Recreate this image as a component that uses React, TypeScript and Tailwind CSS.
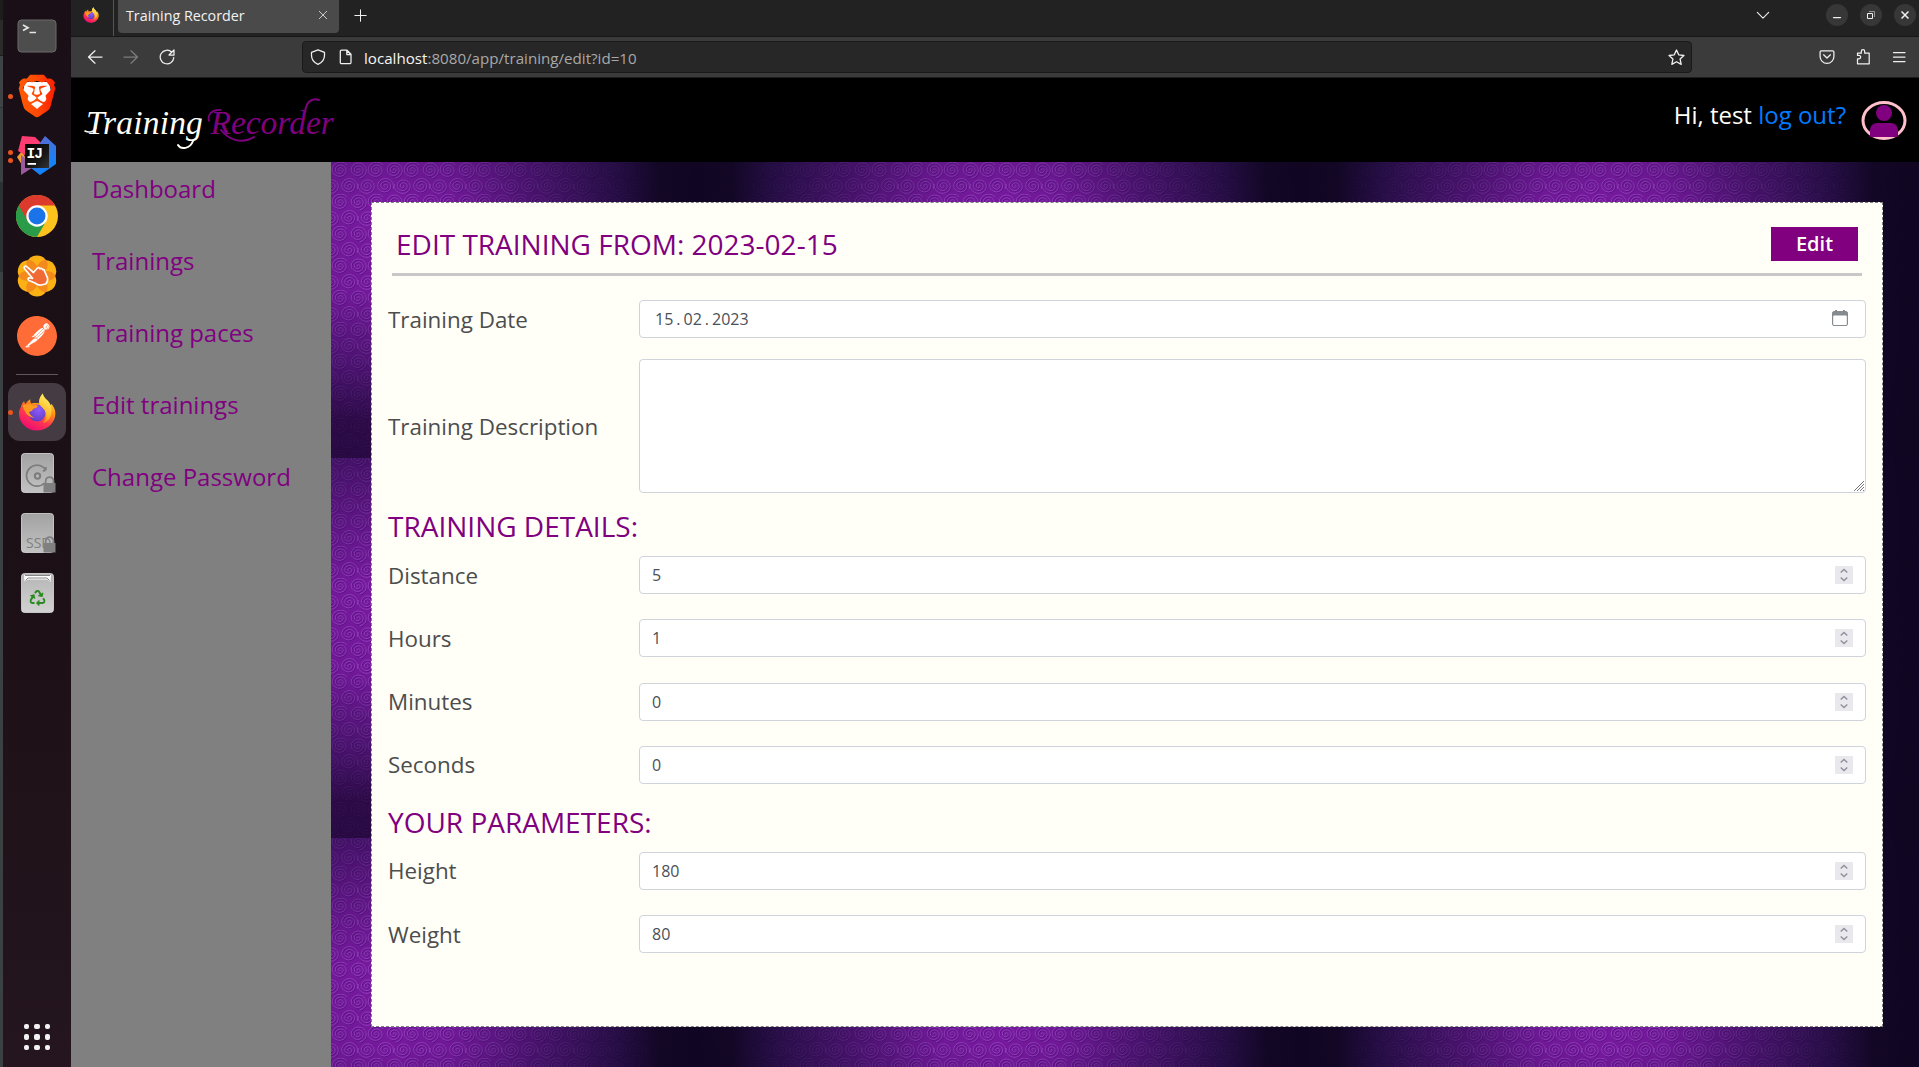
import React from "react";
import { SiBrave, SiPostman } from "react-icons/si";
import { FaRecycle } from "react-icons/fa";

const spiral = (cx: number, cy: number, r: number, start: number) => {
  const pts: string[] = [];
  const turns = 2.9;
  for (let i = 0; i <= 44; i++) {
    const t = i / 44;
    const a = start + t * turns * Math.PI * 2;
    pts.push(`${(cx + Math.cos(a) * r * t).toFixed(2)},${(cy + Math.sin(a) * r * t * 0.92).toFixed(2)}`);
  }
  return pts.join(" ");
};

const SWIRLS: [number, number, number][] = [
  [9, 8, 0],
  [27, 8, 2],
  [0, 24, 4],
  [18, 24, 1],
  [36, 24, 4],
];

function Wallpaper() {
  return (
    <svg className="absolute inset-0 h-full w-full" aria-hidden="true">
      <defs>
        <linearGradient id="sideShade">
          <stop offset="0" stopColor="#100622" />
          <stop offset=".06" stopColor="#100622" stopOpacity=".97" />
          <stop offset=".13" stopColor="#150a32" stopOpacity=".82" />
          <stop offset=".27" stopColor="#1b0b3c" stopOpacity=".48" />
          <stop offset=".4" stopColor="#1b0b3c" stopOpacity=".08" />
          <stop offset=".5" stopColor="#1b0b3c" stopOpacity="0" />
          <stop offset=".6" stopColor="#1b0b3c" stopOpacity=".08" />
          <stop offset=".73" stopColor="#1b0b3c" stopOpacity=".48" />
          <stop offset=".87" stopColor="#150a32" stopOpacity=".82" />
          <stop offset=".94" stopColor="#100622" stopOpacity=".97" />
          <stop offset="1" stopColor="#100622" />
        </linearGradient>
        <linearGradient id="downShade" x2="0" y2="1">
          <stop offset="0" stopColor="#1b0b3c" stopOpacity=".55" />
          <stop offset=".2" stopColor="#1b0b3c" stopOpacity=".2" />
          <stop offset=".34" stopColor="#1b0b3c" stopOpacity="0" />
          <stop offset=".56" stopColor="#1b0b3c" stopOpacity=".04" />
          <stop offset=".75" stopColor="#1b0b3c" stopOpacity=".45" />
          <stop offset=".9" stopColor="#1b0632" stopOpacity=".8" />
          <stop offset="1" stopColor="#1b0632" stopOpacity=".85" />
        </linearGradient>
        <pattern id="swirls" width="36" height="32" patternUnits="userSpaceOnUse">
          <rect width="36" height="32" fill="#7a1aa2" />
          {SWIRLS.map(([x, y, a], i) => (
            <g key={i} fill="none">
              <polyline points={spiral(x + 0.6, y + 0.8, 9, a)} stroke="#5f0f88" strokeWidth="1" />
              <polyline points={spiral(x, y, 9, a)} stroke="#a047c8" strokeWidth=".8" />
            </g>
          ))}
        </pattern>
        <pattern id="shade" x="-243" y="-84" width="607" height="380" patternUnits="userSpaceOnUse">
          <rect width="607" height="380" fill="url(#downShade)" />
          <rect width="607" height="380" fill="url(#sideShade)" />
        </pattern>
      </defs>
      <rect width="100%" height="100%" fill="url(#swirls)" />
      <rect width="100%" height="100%" fill="url(#shade)" />
    </svg>
  );
}

/* ---------- dock ---------- */

function Slot({ children, dots = 0, active = false }: { children: React.ReactNode; dots?: number; active?: boolean }) {
  return (
    <div className="relative flex h-[60px] w-[68px] shrink-0 items-center justify-center">
      <div className={active ? "flex h-[58px] w-[58px] items-center justify-center rounded-xl bg-[#453b42]" : "flex items-center justify-center"}>
        {children}
      </div>
      <div className="absolute left-[5px] top-0 flex h-full flex-col items-center justify-center gap-[3px]">
        {Array.from({ length: dots }, (_, i) => (
          <span key={i} className="h-[5px] w-[5px] rounded-full bg-[#e95420]" />
        ))}
      </div>
    </div>
  );
}

function FirefoxLogo({ size, id }: { size: number; id: string }) {
  return (
    <svg width={size} height={size} viewBox="0 0 40 40">
      <defs>
        <linearGradient id={`${id}a`} x1=".8" y1="0" x2=".25" y2="1">
          <stop offset="0" stopColor="#fff44f" />
          <stop offset=".35" stopColor="#ff980e" />
          <stop offset=".65" stopColor="#ff3750" />
          <stop offset="1" stopColor="#eb0878" />
        </linearGradient>
        <linearGradient id={`${id}b`} x1=".6" y1="0" x2=".3" y2="1">
          <stop offset="0" stopColor="#fff36a" />
          <stop offset=".6" stopColor="#ffbd2e" />
          <stop offset="1" stopColor="#ff7a1c" />
        </linearGradient>
        <radialGradient id={`${id}c`} cx=".6" cy=".3" r=".8">
          <stop offset="0" stopColor="#9059ff" />
          <stop offset="1" stopColor="#5b3bb8" />
        </radialGradient>
      </defs>
      <path
        d="M3 15c.5-3 2-5 3.500-6.500.2 1.500.6 2.400 1.300 3.200C9 9.500 11 7.500 13 6.500c-.3 2 .2 3.300 1 4.500 3-1 6-.5 8-.3C22 6 24 3 26 .5c.5 3 2.500 5 5 7.500 2 2 2.500 3.500 3 5l1.500-1.500C39 16 40 20 39 25c-2 8.500-10 14.500-19 14.500C9.500 39.500 1 31.500 1 21.500c0-2.500.7-4.500 2-6.500z"
        fill={`url(#${id}a)`}
      />
      <circle cx="20" cy="21" r="9" fill={`url(#${id}c)`} />
      <path d="M5 13c4-2 8-1.800 11 .2 1.500-.8 4-.7 5 .4-1 2.200-3.500 2.600-5 3-.5 2-2.500 3-4.500 3.500 1 3 3 5 6 6C11 26 6 20 5 13z" fill="#ff9a1f" />
      <path d="M26 .5c.5 3 2.500 5 5 7.500 4 4 5 9 4 14-1 5.500-5 9-9 9.500 3-3 4.500-8 2.500-12.500-1.500-3.500-5-4.500-6-8.300C22 6 24 3 26 .5z" fill={`url(#${id}b)`} />
    </svg>
  );
}

function DiskIcon({ kind }: { kind: "disk" | "ssd" | "trash" }) {
  return (
    <svg width="38" height="42" viewBox="0 0 38 42" className="-mr-[3px] mt-[2px]">
      <defs>
        <linearGradient id={`g${kind}`} x2="0" y2="1">
          <stop offset="0" stopColor={kind === "trash" ? "#b5b5b5" : "#a2a2a2"} />
          <stop offset="1" stopColor={kind === "trash" ? "#d2d2d2" : "#c2c2c2"} />
        </linearGradient>
      </defs>
      <rect x="1.500" y="1.500" width="32" height="39" rx="3" fill={`url(#g${kind})`} stroke="#dcdcdc" strokeWidth=".8" />
      {kind === "disk" && (
        <g fill="none" stroke="#7d7d7d" strokeWidth="1.700">
          <path d="M25.500 17.500a10.500 10.500 0 1 0-1 13.500" />
          <circle cx="17.500" cy="24" r="2.700" strokeWidth="2" />
          <path d="M23 19.500l2.800-2 .2-2.500" />
        </g>
      )}
      {kind === "ssd" && (
        <text x="6" y="35.500" fontSize="14" fill="#7f7f7f" fontFamily="Open Sans, sans-serif">
          SSD
        </text>
      )}
      {kind !== "trash" && (
        <g>
          <rect x="23.500" y="31" width="12" height="9.500" fill="#808080" />
          <path d="M25.700 31.500v-2.500a3.900 3.900 0 0 1 7.800 0v2.500" fill="none" stroke="#808080" strokeWidth="1.800" />
        </g>
      )}
      {kind === "trash" && (
        <g>
          <path d="M4 3h27l-.5 7-3-2.500H8l-3.500 2z" fill="#fff" />
          <path d="M5 3.500h25M5.500 8.500l2.500-2.500h19l2.500 2.500" stroke="#777" strokeWidth=".9" fill="none" />
          <FaRecycle x="9.500" y="18" size={16} color="#2b8a22" />
        </g>
      )}
    </svg>
  );
}

function Dock() {
  return (
    <div className="flex h-full w-[71px] shrink-0">
      <div className="flex h-full w-[3px] flex-col bg-[#3b4143]">
        <div className="h-[20px] bg-[#1d1d1d]" />
        <div className="h-[36px] border-b border-[#1c1c1c] bg-[#2b2b2b]" />
        <div className="h-[52px] border-b border-[#2c3032] bg-[#3e4345]" />
        <div className="h-[74px] bg-[#3b4042]" />
        <div className="h-[90px] bg-[#2c3133]" />
      </div>
      <div className="flex w-[68px] flex-col bg-linear-to-b from-[#1a0f17] via-[#1b1015] to-[#24151e] pb-[13px] pt-[6px]">
        <Slot>
          <svg width="40" height="34" viewBox="0 0 40 34">
            <rect x="1" y="1" width="38" height="32" rx="3.500" fill="#4d4d4d" stroke="#6a6a6a" />
            <path d="M6 6l5 2.800-5 2.700M12.500 13.500h6.500" fill="none" stroke="#e6e6e6" strokeWidth="1.700" />
          </svg>
        </Slot>
        <Slot dots={1}>
          <svg width="44" height="44" viewBox="0 0 44 44">
            <defs>
              <linearGradient id="brave">
                <stop offset="0" stopColor="#ff5a00" />
                <stop offset=".5" stopColor="#ff4a05" />
                <stop offset="1" stopColor="#ff1c00" />
              </linearGradient>
            </defs>
            <path d="M10 8h24l3 14-7 12-8 6-8-6-7-12z" fill="#fff" />
            <SiBrave x="0.500" y="0.500" size={43} fill="url(#brave)" />
          </svg>
        </Slot>
        <Slot dots={2}>
          <svg width="42" height="42" viewBox="0 0 42 42">
            <defs>
              <linearGradient id="ijb" x2=".5" y2="1">
                <stop offset="0" stopColor="#6b64c8" />
                <stop offset="1" stopColor="#0a86ff" />
              </linearGradient>
              <linearGradient id="ijk" x2="1" y2="1">
                <stop offset="0" stopColor="#000" />
                <stop offset=".6" stopColor="#161616" />
                <stop offset="1" stopColor="#333" />
              </linearGradient>
            </defs>
            <path d="M1 22l5-6 6 12-6 2z" fill="#f29a35" />
            <path d="M5 20l14 11-14 9z" fill="#9a5b9e" />
            <path d="M6 1l13 1 9 9-9 15-17-10z" fill="#ff3d72" />
            <path d="M29 1l11 10v18l-16 11-9-7 10-15-4-6z" fill="url(#ijb)" />
            <rect x="9" y="9" width="24" height="24" fill="url(#ijk)" />
            <text x="10.500" y="22.500" fontSize="14.500" fontWeight="700" fill="#fff" fontFamily="Liberation Mono, monospace" letterSpacing="-1">
              IJ
            </text>
            <rect x="11.500" y="28" width="8.500" height="1.800" fill="#fff" />
          </svg>
        </Slot>
        <Slot>
          <svg width="42" height="42" viewBox="0 0 42 42">
            <circle cx="21" cy="21" r="21" fill="#fcc31e" />
            <path d="M21 21L2.800 10.500A21 21 0 0 0 21 42l9.100-15.800z" fill="#2a9b48" />
            <path d="M2.800 10.500A21 21 0 0 1 39.200 10.500H21l-9.100 15.700z" fill="#dd3a2e" />
            <circle cx="21" cy="21" r="10.700" fill="#fff" />
            <circle cx="21" cy="21" r="8.500" fill="#1a73e8" />
          </svg>
        </Slot>
        <Slot>
          <svg width="42" height="42" viewBox="0 0 42 42">
            <g fill="#fbb114">
              {[0, 60, 120, 180, 240, 300].map((a) => (
                <circle key={a} cx="21" cy="11.500" r="11" transform={`rotate(${a} 21 21)`} />
              ))}
            </g>
            <g fill="#f58a1c">
              {[0, 60, 120, 180, 240, 300].map((a) => (
                <ellipse key={a} cx="21" cy="12" rx="5" ry="9" transform={`rotate(${a + 30} 21 21)`} />
              ))}
            </g>
            <circle cx="21" cy="21" r="6" fill="#e8502a" />
            <path
              d="M8.500 13.500c-1-1.600 1-3.200 2.500-1.700l6.500 5.700 4-4.500c1-1 2-.2 2.500.8 1-1 2.300-.3 2.500.9 1.200-.5 2 .3 2 1.300l3 7c.5 2-.5 5-2 6l-4.500 1c-2 .5-4-.5-6-2l-6-2.500c-1.800-1-.8-3 1-2.500l2.500.3z"
              fill="#ef6a35"
              stroke="#fff"
              strokeWidth="1.700"
              strokeLinejoin="round"
            />
          </svg>
        </Slot>
        <Slot>
          <span className="flex h-[38px] w-[38px] items-center justify-center rounded-full bg-white">
            <SiPostman size={40} color="#ff6c37" className="shrink-0" />
          </span>
        </Slot>
        <div className="flex h-4 items-center justify-center">
          <div className="h-px w-[42px] bg-[#5f565c]" />
        </div>
        <Slot dots={1} active>
          <FirefoxLogo size={38} id="dockfx" />
        </Slot>
        <Slot>
          <DiskIcon kind="disk" />
        </Slot>
        <Slot>
          <DiskIcon kind="ssd" />
        </Slot>
        <Slot>
          <DiskIcon kind="trash" />
        </Slot>
        <div className="mt-auto flex justify-center pb-1">
          <div className="grid grid-cols-3 gap-[5px]">
            {Array.from({ length: 9 }, (_, i) => (
              <span key={i} className="h-[5.500px] w-[5.500px] rounded-[2px] bg-[#f2f2f2]" />
            ))}
          </div>
        </div>
      </div>
    </div>
  );
}

/* ---------- browser chrome ---------- */

function Glyph({ d, size = 16, dim = false }: { d: string; size?: number; dim?: boolean }) {
  return (
    <svg
      width={size}
      height={size}
      viewBox="0 0 16 16"
      fill="none"
      stroke={dim ? "#7d7d7d" : "#f0f0f0"}
      strokeWidth="1.250"
      strokeLinecap="round"
      strokeLinejoin="round"
      className="shrink-0"
    >
      <path d={d} />
    </svg>
  );
}

function TabBar() {
  return (
    <div className="flex h-[37px] border-b border-[#171717] bg-[#222222] font-['Open_Sans',sans-serif] text-[14.300px] text-[#f2f2f2]">
      <div className="flex w-[43px] justify-center border-r border-[#555] pr-[2px] pt-[7px]">
        <FirefoxLogo size={16} id="tabfx" />
      </div>
      <div className="ml-1 flex h-[33px] w-[221px] items-start justify-between rounded-b bg-[#4a4a4a] pl-[8px] pr-[11px]">
        <span className="leading-[31px]">Training Recorder</span>
        <span className="pt-[10px]">
          <Glyph size={10} d="M2 2l12 12M14 2L2 14" />
        </span>
      </div>
      <div className="ml-[15px] pt-[9px]">
        <Glyph size={13} d="M8 1v14M1 8h14" />
      </div>
      <div className="ml-auto flex pr-[3px] pt-1">
        <div className="mr-14 pt-1">
          <Glyph size={14} d="M1.500 5l6.500 6.500L14.500 5" />
        </div>
        <div className="flex gap-3">
          <span className="flex h-[22px] w-[22px] items-center justify-center rounded-full bg-[#373737]">
            <Glyph size={16} d="M4.500 10.500h7" />
          </span>
          <span className="flex h-[22px] w-[22px] items-center justify-center rounded-full bg-[#373737]">
            <svg width="8" height="8" viewBox="0 0 8 8" fill="none">
              <path d="M.5 2.500h5v5h-5z" stroke="#f0f0f0" />
              <path d="M2 .5h5.500V6" stroke="#9a9a9a" />
            </svg>
          </span>
          <span className="flex h-[22px] w-[22px] items-center justify-center rounded-full bg-[#373737]">
            <svg width="8" height="8" viewBox="0 0 8 8">
              <path d="M.5.5l7 7M7.500.5l-7 7" stroke="#f0f0f0" strokeWidth="1.500" />
            </svg>
          </span>
        </div>
      </div>
    </div>
  );
}

function NavBar() {
  return (
    <div className="flex h-[41px] items-center border-b border-[#1d1d1d] bg-[#3b3b3b]">
      <div className="ml-4 flex w-[215px] gap-5">
        <Glyph d="M15 8H1.500M8 1.800L1.500 8 8 14.200" />
        <Glyph dim d="M1 8h13.500M8 1.800L14.500 8 8 14.200" />
        <Glyph d="M14.800 8.500A6.800 6.800 0 1 1 12.800 3.200M15 1v5h-5z" />
      </div>
      <div className="flex h-8 w-[1390px] items-center rounded border border-[#1a1a1a] bg-[#272727] pl-[7px] pr-[6px]">
        <Glyph size={16} d="M8 .8L1.500 3.300v3C1.500 10.500 4 13.700 8 15.300c4-1.600 6.500-4.800 6.500-9v-3z" />
        <span className="ml-3">
          <Glyph d="M3.500 1.200h5.500l4 4v8.300a1.200 1.200 0 0 1-1.200 1.200H3.500a1.200 1.200 0 0 1-1.200-1.200V2.400a1.200 1.200 0 0 1 1.200-1.200zM8.800 1.500v4h4z" />
        </span>
        <span className="ml-[10px] pt-px font-['Open_Sans',sans-serif] text-[15.150px] leading-5 text-[#a9a9a9]">
          <span className="text-[#f5f5f5]">localhost</span>:8080/app/training/edit?id=10
        </span>
        <span className="ml-auto">
          <Glyph size={17} d="M8 1l2.100 4.500 4.900.6-3.600 3.400 1 4.900L8 12l-4.400 2.400 1-4.900L1 6.100l4.900-.6z" />
        </span>
      </div>
      <div className="ml-auto mr-3 flex items-center gap-5">
        <Glyph d="M2.300 1.800h11.400a1.200 1.200 0 0 1 1.200 1.200v4.500a6.900 6.900 0 0 1-13.800 0V3a1.200 1.200 0 0 1 1.200-1.200zM4.600 5.800L8 9l3.400-3.200" />
        <Glyph d="M2.500 9.800H4a1.600 1.600 0 0 0 0-3.400H2.500V4.200h3.800V2.400a1.700 1.700 0 0 1 3.400 0v1.800h4.500v10.600H2.500z" />
        <Glyph size={16} d="M2.500 3.500h11.500M2.500 8h11.500M2.500 12.500h11.500" />
      </div>
    </div>
  );
}

/* ---------- application ---------- */

function Header() {
  return (
    <header className="flex h-[84px] justify-between bg-black">
      <div className="relative w-[280px] pl-[15px] pt-[21px] font-['Liberation_Serif',serif] text-[33.500px] italic leading-[48px] text-[#fffff8]">
        <span className="tracking-[0.2px]">Training</span> <span className="-ml-px text-[purple]">Recorder</span>
        <svg className="absolute left-0 top-0" width="280" height="84" fill="none" strokeLinecap="round" aria-hidden="true">
          <path d="M14 53c4 2 9 1 11-3" stroke="#fffff8" strokeWidth="1.600" />
          <path d="M107 67c3 5 12 4 15-4" stroke="#fffff8" strokeWidth="2" />
          <path d="M150 52c7 9 20 15 33 7" stroke="purple" strokeWidth="2" />
          <path d="M234 34c1-9 6-15 14-12" stroke="purple" strokeWidth="2" />
          <path d="M138 43c-2-6 3-12 12-11" stroke="purple" strokeWidth="1.600" />
        </svg>
      </div>
      <div className="flex pr-3 font-['Open_Sans',sans-serif] text-2xl">
        <p className="pt-[19px] leading-9 text-[#fffff8]">
          Hi, test <span className="text-[#007bff]">log out?</span>
        </p>
        <svg width="46" height="40" viewBox="0 0 46 40" className="ml-[15px] mt-[22px]">
          <ellipse cx="23" cy="20.500" rx="21" ry="18" fill="#000" stroke="#ffc0cb" strokeWidth="3" />
          <circle cx="23" cy="13" r="8" fill="purple" />
          <path d="M9 37v-7a7 7 0 0 1 7-7h14a7 7 0 0 1 7 7v7z" fill="purple" />
        </svg>
      </div>
    </header>
  );
}

const LINKS = ["Dashboard", "Trainings", "Training paces", "Edit trainings", "Change Password"];

function Sidebar() {
  return (
    <nav className="flex w-[260px] shrink-0 flex-col gap-9 bg-[gray] pl-[21px] pt-[9px] text-2xl leading-9 text-[purple]">
      {LINKS.map((l) => (
        <a key={l}>{l}</a>
      ))}
    </nav>
  );
}

function Spinner() {
  return (
    <span className="flex h-[18px] w-[18px] items-center justify-center bg-[#e9e9ed]">
      <svg width="8" height="14" viewBox="0 0 8 14" fill="none" stroke="#8f8f9d" strokeWidth="1.400">
        <path d="M.7 4.500L4 1.500l3.300 3M.7 9.500L4 12.500l3.300-3" />
      </svg>
    </span>
  );
}

function NumberRow({ label, value }: { label: string; value: string }) {
  return (
    <div className="flex h-[38px] items-center">
      <label className="w-[251px] shrink-0 pt-px text-[22.400px] leading-[38px]">{label}</label>
      <div className="flex h-[38px] w-[1227px] items-center justify-between rounded border border-[#ced4da] bg-white pl-3 pr-3 text-base leading-6 text-[#495057]">
        {value}
        <Spinner />
      </div>
    </div>
  );
}

function SectionTitle({ children }: { children: React.ReactNode }) {
  return <h2 className="text-[28px] leading-[34px] text-[purple]">{children}</h2>;
}

function EditCard() {
  return (
    <section className="relative h-[825px] w-[1512px] border border-dashed border-[#808080] bg-[#fffff8] px-4 text-[#4d4d4d]">
      <div className="ml-1 mr-1 flex h-[73px] items-start justify-between border-b-[3px] border-[#c8c8c8] pl-1 pr-1">
        <h1 className="pt-5 text-[28px] leading-[42px] text-[purple]">EDIT TRAINING FROM: 2023-02-15</h1>
        <button className="mt-6 h-[34px] w-[87px] bg-[purple] text-xl font-semibold leading-[34px] text-[#fffff8]">Edit</button>
      </div>
      <div className="mt-6 flex h-[38px] items-center">
        <label className="w-[251px] shrink-0 pt-px text-[22.400px] leading-[38px]">Training Date</label>
        <div className="flex h-[38px] w-[1227px] items-center rounded border border-[#ced4da] bg-white pl-[15px] pr-[17px] text-base leading-6 text-[#495057]">
          <span>15</span>
          <span className="px-[3px]">.</span>
          <span>02</span>
          <span className="px-[3px]">.</span>
          <span>2023</span>
          <svg width="16" height="16" viewBox="0 0 16 16" className="-mt-[2px] ml-auto">
            <path d="M3 0h2v1h6V0h2v1h1.500L16 2.500v12L14.500 16h-13L0 14.500v-12L1.500 1H3z" fill="#868b90" />
            <rect x="1.200" y="5.500" width="13.600" height="9.500" rx="1" fill="#fff" />
          </svg>
        </div>
      </div>
      <div className="mt-[21px] flex h-[134px] items-center">
        <label className="w-[251px] shrink-0 pt-[2px] text-[22.400px] leading-[38px]">Training Description</label>
        <div className="flex h-[134px] w-[1227px] items-end justify-end rounded border border-[#ced4da] bg-white">
          <svg width="11" height="11" viewBox="0 0 11 11" stroke="#777" strokeWidth="1">
            <path d="M0 10L10 0M3 10l7-7M6 10l4-4M9 10l1-1" />
          </svg>
        </div>
      </div>
      <div className="mb-[13px] mt-4">
        <SectionTitle>TRAINING DETAILS:</SectionTitle>
      </div>
      <div className="flex flex-col gap-[25.330px]">
        <NumberRow label="Distance" value="5" />
        <NumberRow label="Hours" value="1" />
        <NumberRow label="Minutes" value="0" />
        <NumberRow label="Seconds" value="0" />
      </div>
      <div className="mb-[13px] mt-[21px]">
        <SectionTitle>YOUR PARAMETERS:</SectionTitle>
      </div>
      <div className="flex flex-col gap-[25.330px]">
        <NumberRow label="Height" value="180" />
        <NumberRow label="Weight" value="80" />
      </div>
    </section>
  );
}

export default function App() {
  return (
    <div className="flex h-[1067px] w-[1919px] overflow-hidden bg-black">
      <Dock />
      <div className="flex min-w-0 flex-1 flex-col">
        <TabBar />
        <NavBar />
        <Header />
        <div className="flex min-h-0 flex-1 font-['Open_Sans',sans-serif]">
          <Sidebar />
          <main className="relative flex-1 pl-10 pt-10">
            <Wallpaper />
            <EditCard />
          </main>
        </div>
      </div>
    </div>
  );
}
